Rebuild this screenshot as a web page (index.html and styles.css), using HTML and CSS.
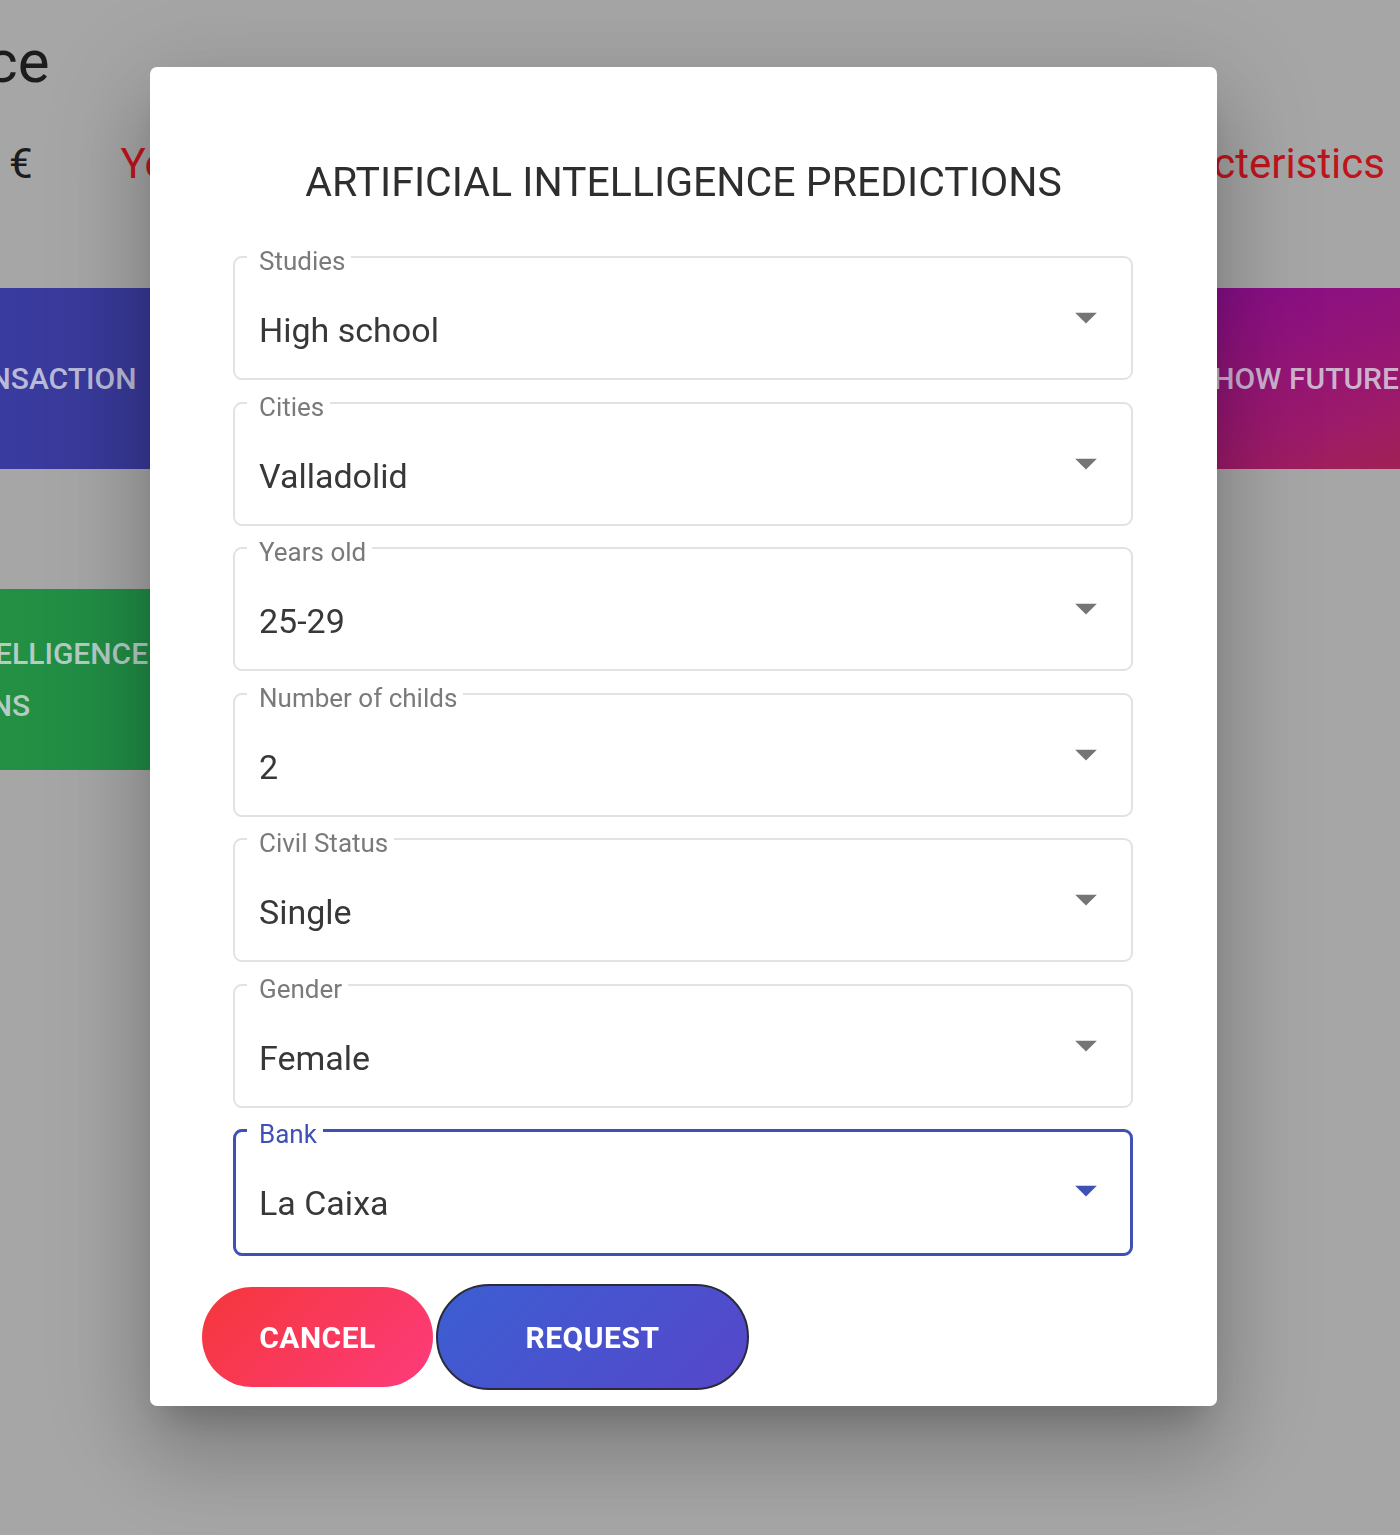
FILE: index.html
```html
<!DOCTYPE html>
<html lang="en">
<head>
    <meta charset="UTF-8">
    <meta name="viewport" content="width=device-width, initial-scale=1.0">
    <title>AI Predictions</title>
    <link rel="stylesheet" href="styles.css">
</head>
<body>

    <!-- Page behind the dialog -->
    <main class="page">
        <h1 class="page-title">Your balance</h1>

        <div class="stats">
            <p class="stat stat-amount">2.150 €</p>
            <p class="stat stat-link">Your movements</p>
            <p class="stat stat-link stat-right">Your characteristics</p>
        </div>

        <div class="menu">
            <button class="menu-card card-blue">NEW TRANSACTION</button>
            <button class="menu-card card-orange">SHOW MOVEMENTS</button>
            <button class="menu-card card-purple">SHOW FUTURE BALANCE</button>
            <button class="menu-card card-green">ARTIFICIAL INTELLIGENCE PREDICTIONS</button>
        </div>
    </main>

    <!-- Prediction dialog -->
    <div class="backdrop">
        <div class="dialog">
            <h2 class="dialog-title">ARTIFICIAL INTELLIGENCE PREDICTIONS</h2>

            <form class="fields">
                <fieldset class="field">
                    <legend>Studies</legend>
                    <div class="select-row">
                        <span class="select-value">High school</span>
                        <svg class="arrow" viewBox="0 0 24 24"><path d="M7 10l5 5 5-5z"/></svg>
                    </div>
                </fieldset>

                <fieldset class="field">
                    <legend>Cities</legend>
                    <div class="select-row">
                        <span class="select-value">Valladolid</span>
                        <svg class="arrow" viewBox="0 0 24 24"><path d="M7 10l5 5 5-5z"/></svg>
                    </div>
                </fieldset>

                <fieldset class="field">
                    <legend>Years old</legend>
                    <div class="select-row">
                        <span class="select-value">25-29</span>
                        <svg class="arrow" viewBox="0 0 24 24"><path d="M7 10l5 5 5-5z"/></svg>
                    </div>
                </fieldset>

                <fieldset class="field">
                    <legend>Number of childs</legend>
                    <div class="select-row">
                        <span class="select-value">2</span>
                        <svg class="arrow" viewBox="0 0 24 24"><path d="M7 10l5 5 5-5z"/></svg>
                    </div>
                </fieldset>

                <fieldset class="field">
                    <legend>Civil Status</legend>
                    <div class="select-row">
                        <span class="select-value">Single</span>
                        <svg class="arrow" viewBox="0 0 24 24"><path d="M7 10l5 5 5-5z"/></svg>
                    </div>
                </fieldset>

                <fieldset class="field">
                    <legend>Gender</legend>
                    <div class="select-row">
                        <span class="select-value">Female</span>
                        <svg class="arrow" viewBox="0 0 24 24"><path d="M7 10l5 5 5-5z"/></svg>
                    </div>
                </fieldset>

                <fieldset class="field field-focused">
                    <legend>Bank</legend>
                    <div class="select-row">
                        <span class="select-value">La Caixa</span>
                        <svg class="arrow" viewBox="0 0 24 24"><path d="M7 10l5 5 5-5z"/></svg>
                    </div>
                </fieldset>
            </form>

            <div class="dialog-actions">
                <button class="btn btn-cancel">CANCEL</button>
                <button class="btn btn-request">REQUEST</button>
            </div>
        </div>
    </div>

</body>
</html>
```

FILE: styles.css
```css
/* Page */
body {
    margin: 0;
    overflow: hidden;
    background-color: #a6a6a6;
    font-family: Roboto, "Liberation Sans", sans-serif;
}

.page {
    width: 1400px;
}

.page-title {
    margin: 27px 0 0 -297px;
    font-size: 60px;
    font-weight: 400;
    line-height: 70px;
    color: #1c1c1c;
    white-space: nowrap;
}

.stats {
    display: flex;
    margin: 42px 15px 0 0;
}

.stat {
    margin: 0;
    font-size: 42px;
    line-height: 49px;
    white-space: nowrap;
}

.stat-amount {
    margin-left: -107px;
    color: #1c1c1c;
}

.stat-link {
    margin-left: 88px;
    color: #c0141c;
}

.stat-right {
    margin-left: auto;
}

/* Menu cards */
.menu {
    display: grid;
    grid-template-columns: repeat(3, 600px);
    column-gap: 76px;
    row-gap: 120px;
    margin: 100px 0 0 -200px;
}

.menu-card {
    height: 181px;
    padding: 0 50px;
    border: none;
    text-align: left;
    font-family: Roboto, "Liberation Sans", sans-serif;
    font-size: 30px;
    font-weight: 500;
    line-height: 52px;
    color: rgba(222, 222, 232, 0.8);
}

.card-blue {
    padding-left: 61px;
    background: linear-gradient(90deg, #3c3ea6, #36358f);
}

.card-orange {
    background: linear-gradient(135deg, #b06a1a, #a04a1a);
}

.card-purple {
    padding-left: 43px;
    background: linear-gradient(160deg, #840c8c 0%, #9c1a6a 50%, #a8302e 100%);
}

.card-green {
    padding: 0 120px 0 41px;
    text-indent: -55px;
    background: linear-gradient(90deg, #2a943e, #18874c);
}

/* Dialog */
.backdrop {
    position: fixed;
    inset: 0;
    display: flex;
    justify-content: center;
    align-items: flex-start;
    padding: 67px 33px 0 0;
    box-sizing: border-box;
}

.dialog {
    width: 1067px;
    padding: 92px 0 16px;
    box-sizing: border-box;
    background-color: #fff;
    border-radius: 7px;
    box-shadow: 0 24px 33px -15px rgba(0,0,0,0.2),
                0 52px 83px 7px rgba(0,0,0,0.14),
                0 20px 100px 17px rgba(0,0,0,0.12);
}

.dialog-title {
    margin: 0;
    text-align: center;
    font-size: 41px;
    font-weight: 400;
    line-height: 47px;
    color: #2e2e2e;
}

.fields {
    display: flex;
    flex-direction: column;
    gap: 5.5px;
    margin: 34px 84px 0 83px;
}

.field {
    margin: 0;
    padding: 0 19px 0 24px;
    border: 2px solid #e2e2e2;
    border-radius: 9px;
}

.field legend {
    margin-left: -12px;
    padding: 8px 6px 0 12px;
    font-size: 26px;
    line-height: 26px;
    color: #7a7a7a;
}

.select-row {
    display: flex;
    justify-content: space-between;
    align-items: flex-start;
    height: 104px;
}

.select-value {
    padding-top: 35px;
    font-size: 34px;
    line-height: 42px;
    color: #383838;
}

.arrow {
    width: 52px;
    height: 52px;
    margin-top: 17px;
    fill: #757575;
}

.field-focused {
    border: 3px solid #3f51b5;
    padding: 0 18px 0 23px;
}

.field-focused .select-row {
    height: 106px;
}

.field-focused legend {
    color: #3f51b5;
}

.field-focused .arrow {
    fill: #3f51b5;
}

/* Buttons */
.dialog-actions {
    display: flex;
    align-items: center;
    gap: 3px;
    margin: 28px 0 0 52px;
}

.btn {
    border-radius: 60px;
    font-family: Roboto, "Liberation Sans", sans-serif;
    font-size: 30px;
    font-weight: 700;
    letter-spacing: 0.5px;
    color: #fff;
    cursor: pointer;
}

.btn-cancel {
    width: 231px;
    height: 100px;
    border: none;
    background: linear-gradient(135deg, #f5373a 0%, #fd3b7c 100%);
}

.btn-request {
    width: 313px;
    height: 106px;
    border: 2px solid #2b2b3a;
    background: linear-gradient(135deg, #3c5ed2 0%, #5647ca 100%);
}
```
